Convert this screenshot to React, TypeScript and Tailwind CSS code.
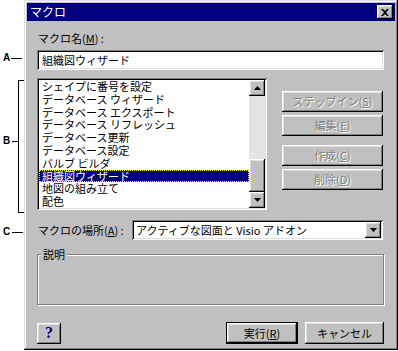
import React from "react";

const raised =
  "shadow-[inset_-1px_-1px_#000000,inset_1px_1px_#ffffff,inset_-2px_-2px_#808080,inset_2px_2px_#dfdfdf]";
const sunken =
  "shadow-[inset_1px_1px_#808080,inset_-1px_-1px_#ffffff,inset_2px_2px_#000000,inset_-2px_-2px_#dfdfdf]";
const disabledText = "text-[#808080] [text-shadow:1px_1px_0_#ffffff]";

const items = [
  "シェイプに番号を設定",
  "データベース ウィザード",
  "データベース エクスポート",
  "データベース リフレッシュ",
  "データベース更新",
  "データベース設定",
  "バルブ ビルダ",
  "組織図ウィザード",
  "地図の組み立て",
  "配色",
];

function SideButton({ label, u }: { label: string; u: string }) {
  return (
    <div className={`h-[21px] w-[101px] flex items-center justify-center bg-[#c0c0c0] ${raised}`}>
      <span className={`text-[11px] leading-[13px] ${disabledText}`}>
        {label}(<span className="underline">{u}</span>)
      </span>
    </div>
  );
}

function Arrow({ up }: { up?: boolean }) {
  return (
    <svg width="7" height="4" viewBox="0 0 7 4">
      {up ? <polygon points="3.5,0 7,4 0,4" fill="#000" /> : <polygon points="0,0 7,0 3.5,4" fill="#000" />}
    </svg>
  );
}

export default function App() {
  return (
    <div
      className="relative flex w-[398px] h-[351px] bg-white overflow-hidden"
      style={{ fontFamily: "'Noto Sans CJK JP', 'Liberation Sans', sans-serif" }}
    >
      {/* annotation column */}
      <div className="relative w-[24px] shrink-0 text-black" style={{ fontFamily: "'Liberation Sans', sans-serif" }}>
        <span className="absolute left-[3px] top-[53px] text-[10px] font-black leading-none">A</span>
        <div className="absolute left-[11px] top-[58px] w-[11px] h-px bg-black" />
        <span className="absolute left-[3px] top-[136px] text-[10px] font-black leading-none">B</span>
        <div className="absolute left-[12px] top-[141px] w-[6px] h-px bg-black" />
        <div className="absolute left-[18px] top-[80px] w-px h-[133px] bg-black" />
        <div className="absolute left-[18px] top-[80px] w-[6px] h-px bg-black" />
        <div className="absolute left-[18px] top-[212px] w-[6px] h-px bg-black" />
        <span className="absolute left-[3px] top-[227px] text-[10px] font-black leading-none">C</span>
        <div className="absolute left-[12px] top-[232px] w-[11px] h-px bg-black" />
      </div>

      {/* dialog */}
      <div
        className={`w-[374px] h-[350px] bg-[#c0c0c0] p-[3px] flex flex-col shadow-[inset_-1px_-1px_#000000,inset_1px_1px_#dfdfdf,inset_-2px_-2px_#808080,inset_2px_2px_#ffffff]`}
      >
        {/* title bar */}
        <div className="h-[18px] bg-[#000080] flex items-center justify-between pl-[3px] pr-[2px]">
          <span className="text-white text-[12px] leading-[14px]">マクロ</span>
          <div className={`w-[16px] h-[14px] bg-[#c0c0c0] flex items-center justify-center ${raised}`}>
            <svg width="8" height="7" viewBox="0 0 8 7">
              <path d="M0 0h2l2 2l2-2h2l-3 3.5l3 3.5h-2l-2-2l-2 2h-2l3-3.5z" fill="#000" />
            </svg>
          </div>
        </div>

        <div className="flex flex-col pl-[10px] pr-[11px]">
          {/* name label */}
          <div className="mt-[10px] h-[14px] text-[11px] leading-[14px] pl-[1px]">
            マクロ名(<span className="underline">M</span>) :
          </div>
          {/* name input */}
          <div className={`mt-[5px] h-[20px] bg-white flex items-center pl-[5px] ${sunken}`}>
            <span className="text-[11px] leading-[14px]">組織図ウィザード</span>
          </div>

          {/* list row */}
          <div className="mt-[8px] flex">
            <div className={`w-[230px] h-[132px] bg-white p-[2px] flex ${sunken}`}>
              <div className="flex-1 overflow-hidden flex flex-col">
                {items.map((it, i) => (
                  <div
                    key={it}
                    className={`h-[12.8px] shrink-0 flex items-center pl-[3px] text-[11px] leading-[12.8px] whitespace-nowrap ${
                      i === 7 ? "bg-[#000080] text-white outline-1 outline-dotted outline-[#ffff00] -outline-offset-1" : "text-black"
                    }`}
                  >
                    {it}
                  </div>
                ))}
              </div>
              {/* scrollbar */}
              <div className="w-[16px] flex flex-col bg-[#e4e4e4]">
                <div className={`h-[16px] bg-[#c0c0c0] flex items-center justify-center ${raised}`}>
                  <Arrow up />
                </div>
                <div className="flex-1 flex flex-col justify-end">
                  <div className={`h-[33px] bg-[#c0c0c0] ${raised}`} />
                </div>
                <div className={`h-[16px] bg-[#c0c0c0] flex items-center justify-center ${raised}`}>
                  <Arrow />
                </div>
              </div>
            </div>

            <div className="ml-[15px] mt-[13px] flex flex-col">
              <SideButton label="ステップイン" u="S" />
              <div className="mt-[3px]">
                <SideButton label="編集" u="E" />
              </div>
              <div className="mt-[9px]">
                <SideButton label="作成" u="C" />
              </div>
              <div className="mt-[3px]">
                <SideButton label="削除" u="D" />
              </div>
            </div>
          </div>

          {/* location row */}
          <div className="mt-[10px] flex items-center">
            <span className="w-[95px] text-[11px] leading-[14px] pl-[1px] whitespace-nowrap">
              マクロの場所(<span className="underline">A</span>) :
            </span>
            <div className={`w-[251px] h-[20px] bg-white flex items-center p-[2px] ${sunken}`}>
              <span className="flex-1 pl-[2px] text-[11px] leading-[14px] whitespace-nowrap">
                アクティブな図面と Visio アドオン
              </span>
              <div className={`w-[16px] h-[16px] bg-[#c0c0c0] flex items-center justify-center ${raised}`}>
                <Arrow />
              </div>
            </div>
          </div>

          {/* description group */}
          <div className="relative mt-[14px] h-[51px] border border-[#808080] shadow-[1px_1px_#ffffff,inset_1px_1px_#ffffff]">
            <span className="absolute left-[3px] -top-[8px] px-[2px] bg-[#c0c0c0] text-[11px] leading-[14px]">説明</span>
          </div>

          {/* bottom buttons */}
          <div className="mt-[17px] flex items-center">
            <div className={`w-[24px] h-[21px] bg-[#c0c0c0] flex items-center justify-center ${raised}`}>
              <span className="text-[#000080] font-bold text-[16px] leading-none" style={{ fontFamily: "'Liberation Serif', serif" }}>?</span>
            </div>
            <div className="flex-1" />
            <div className="w-[72px] h-[22px] border border-black">
              <div className={`w-full h-full bg-[#c0c0c0] flex items-center justify-center ${raised}`}>
                <span className="text-[11px] leading-[14px]">
                  実行(<span className="underline">R</span>)
                </span>
              </div>
            </div>
            <div className={`ml-[7px] w-[79px] h-[22px] bg-[#c0c0c0] flex items-center justify-center ${raised}`}>
              <span className="text-[11px] leading-[14px]">キャンセル</span>
            </div>
          </div>
        </div>
      </div>
    </div>
  );
}
